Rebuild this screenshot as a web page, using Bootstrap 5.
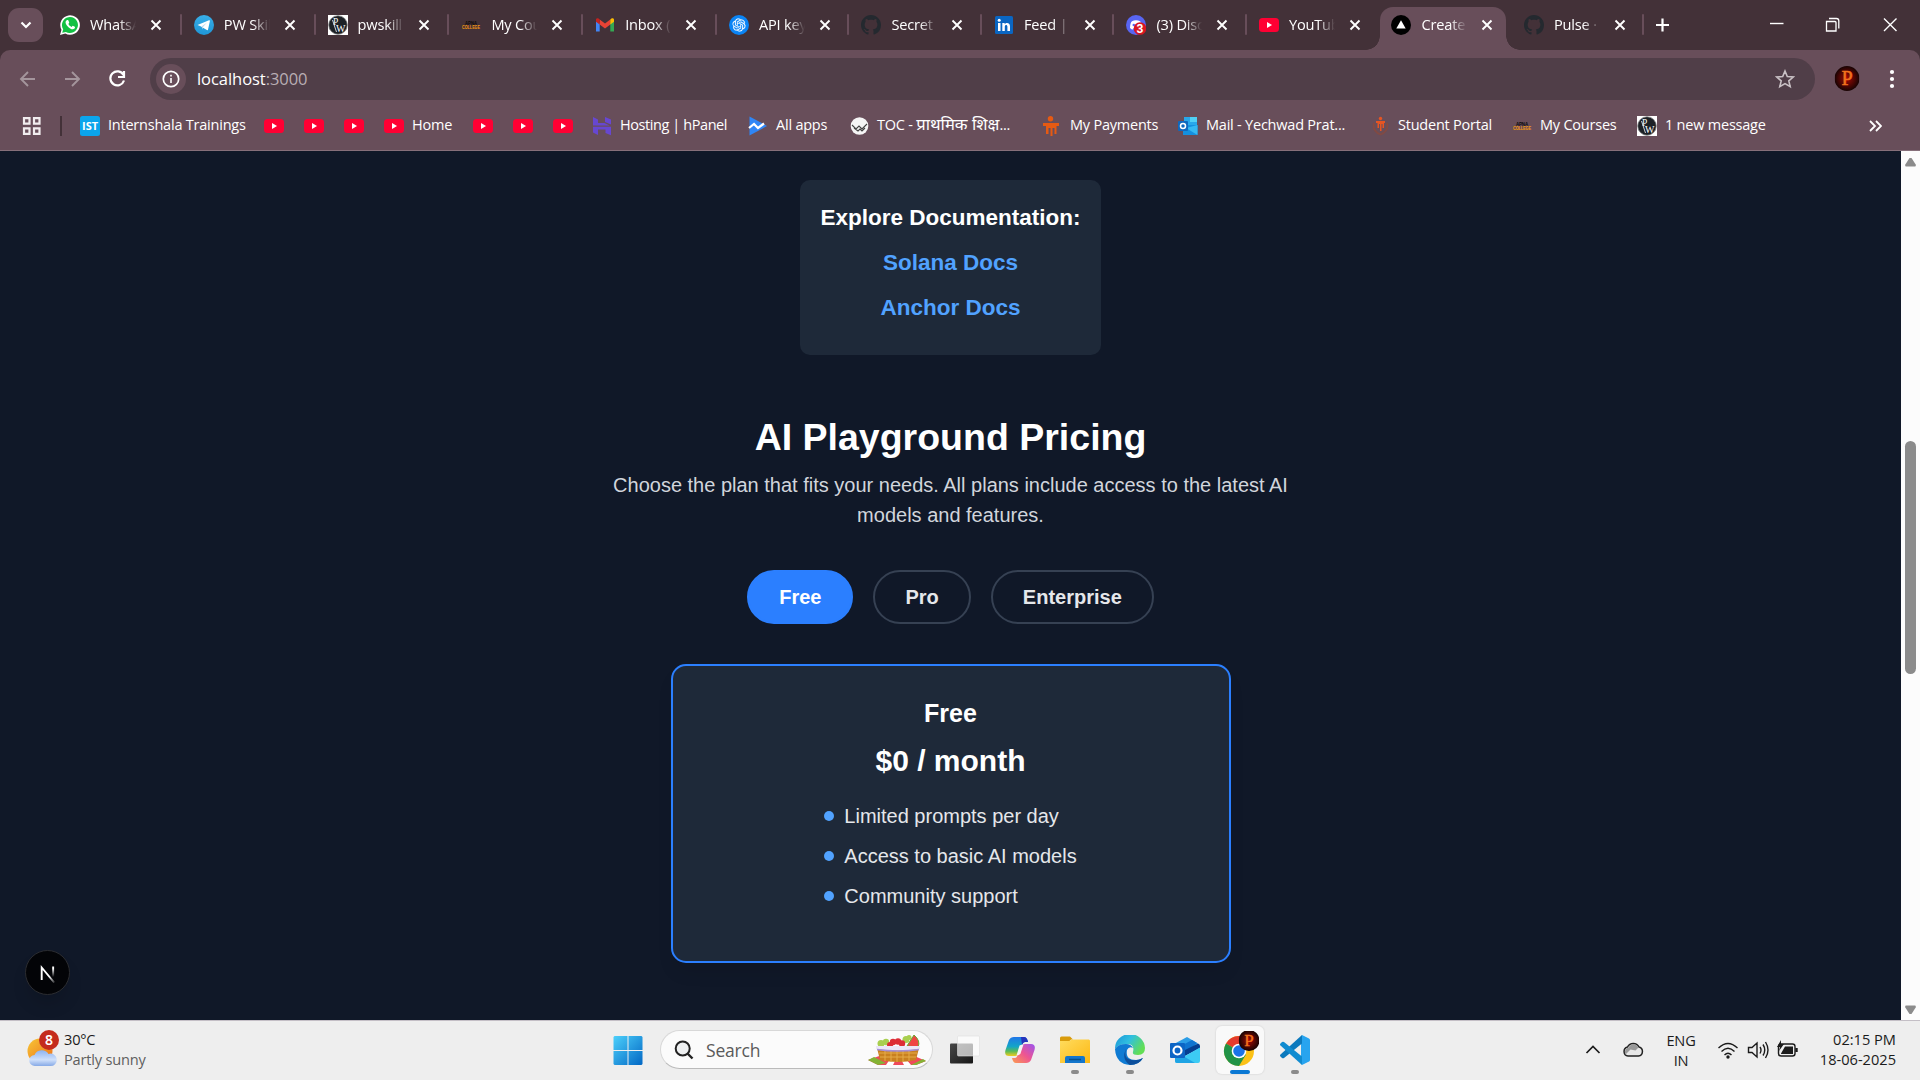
<!DOCTYPE html>
<html lang="en">
<head>
<meta charset="utf-8">
<title>Create Next App</title>
<link rel="stylesheet" href="https://cdn.jsdelivr.net/npm/bootstrap@5.3.0/dist/css/bootstrap.min.css">
<style>
html,body{height:100%}
body{font-family:"Open Sans","Noto Sans",sans-serif;overflow:hidden;background:#101828;width:1920px;height:1080px}
svg{display:block;flex:none}
.tabstrip{height:50px;background:#433138;padding-left:8px}
.tab-search{width:35px;height:34px;border-radius:11px;background:#684e5a;margin-right:5px;flex:none}
.btab{width:132.5px;height:43px;margin-top:7px;padding:0 0 0 12px;position:relative;color:#fff;flex:none}
.btab:nth-child(-n+6){width:133.8px}
.btab::after{content:"";position:absolute;right:0;top:7px;width:2px;height:21px;background:#684e5a;border-radius:1px}
.btab .ttl{width:48px;margin-left:10px;white-space:nowrap;font-size:14.6px;letter-spacing:-.2px;-webkit-mask-image:linear-gradient(90deg,#000 60%,transparent 96%);mask-image:linear-gradient(90deg,#000 60%,transparent 96%)}
.btab .cls{margin-left:12px}
.btab>*{margin-top:-7px}
.btab.cur::before{content:"";position:absolute;left:1px;right:6px;top:0;bottom:0;background:#684e5a;border-radius:13px 13px 0 0}
.btab.cur>*{position:relative;z-index:1}
.btab.cur::after,.btab.prev::after{display:none}
.flare{position:absolute!important;bottom:0;width:14px;height:14px;margin:0!important}
.flare.l{left:-13px;background:radial-gradient(circle at 0 0,transparent 13.5px,#684e5a 14px)}
.flare.r{right:-8px;background:radial-gradient(circle at 100% 0,transparent 13.5px,#684e5a 14px)}
.corner-fill{background:#433138}
.toolbar{height:51px;background:#684e5a;border-radius:10px 10px 0 0;padding:8px 0 0 17px}
.omni{width:1665px;height:42px;border-radius:21px;background:#503e48;padding-left:6px;padding-right:20px;margin-left:23px;color:#fff;font-size:16.5px;letter-spacing:-.05px}
.omni .info-dot{width:30px;height:30px;border-radius:50%;background:#684e5a}
.omni .url{margin-left:11px}
.omni .port{color:#b9aeb4}
.bmbar{height:50px;background:#684e5a;border-bottom:1px solid #866f7a;padding-left:22px;color:#fff;font-size:14.5px;letter-spacing:-.22px}
.bm{flex:none;white-space:nowrap;gap:8px}
.bm svg{width:20px}
.bm>span{position:relative;top:-1px}
.deva{font-size:16.6px;line-height:16px;letter-spacing:0}
.tight{letter-spacing:-.42px}
.w40{width:40px}.w89{width:89px}.w39{width:39px}
.w184{width:184px}.w156{width:156px}.w101{width:101px}.w193{width:193px}.w136{width:136px}.w192{width:192px}.w142{width:142px}.w125{width:125px}.w232{width:232px}
.bm-rule{width:2px;height:20px;background:#433138;margin:0 18px 0 19px}
.viewport{height:869px;background:#101828}
.site{width:1901px;padding-top:29px;font-family:"Liberation Sans",Arial,sans-serif;font-size:20px;line-height:30px;color:#ebe6e7}
.doc-card{background:#1e2939;border-radius:10px;padding:20px 20px 30px;gap:10px;font-weight:700;font-size:22.5px;line-height:35px;width:301px;color:#fff;text-align:center;white-space:nowrap}
.doc-card a{color:#51a2ff;text-decoration:none}
.site h2{font-size:37.5px;line-height:45px;font-weight:700;color:#fff;margin:60px 0 10px}
.intro{width:720px;color:#d1d5dc;margin:0 0 40px;text-align:center}
.plans{gap:20px}
.plan-btn{border:2px solid #364153;border-radius:27px;background:transparent;color:#e5e7eb;font-weight:700;font-size:20px;line-height:30px;padding:10px 30px}
.plan-btn.on{background:#2b7fff;border-color:#2b7fff;color:#fff}
.plan-card{width:560px;height:299px;margin-top:40px;border:2px solid #2b7fff;border-radius:15px;background:#1e2939;padding:30px;box-shadow:0 12px 18px -4px rgba(0,0,0,.1)}
.plan-card h3{font-size:25px;line-height:35px;font-weight:700;margin:0 0 10px;color:#fff}
.price{font-size:30px;line-height:40px;font-weight:700;color:#fff;margin-bottom:20px}
.feat{gap:10px;color:#e5e7eb}
.feat li{gap:10px}
.feat i{width:10px;height:10px;border-radius:50%;background:#51a2ff}
.next-badge{position:absolute;left:25px;top:950px;width:45px;height:45px;border-radius:50%;background:#030407;border:1px solid #2b2c30;box-shadow:0 12px 18px -4px rgba(0,0,0,.15)}
.sbar{width:19px;background:#fcfcfc;padding:6px 0 5px}
.thumb{width:11px;height:233px;border-radius:6px;background:#8b8b8b;margin-top:274px}
.taskbar{height:60px;background:#eee;border-top:1px solid #c4bfc6;color:#1b1b1b;font-size:14.6px;line-height:20px;letter-spacing:-.2px;padding-bottom:2px}
.weather{width:585px;padding-left:26px;gap:5px;flex:none}
.two-line{padding-bottom:2px}
.dim{color:#5f5f5f}
.pinned{flex:none}
.search-pill{width:273px;height:39px;border:1px solid #d8d8d8;border-bottom-color:#bbb;border-radius:20px;background:#fbfbfb;margin-left:17px;padding:0 6px 0 13px;font-size:17.5px;color:#5a5a5a}
.app{width:55px;height:59px;position:relative}
.app::after{content:"";position:absolute;bottom:5px;left:calc(50% - 4px);width:8px;height:4px;border-radius:2px;background:#8a8a8a}
.app.idle::after{display:none}
.app.live::after{width:20px;left:calc(50% - 10px);background:#0a78d4}
.app.live .tile{width:48px;height:48px;border-radius:6px;background:#f9f9f9;box-shadow:0 0 1px 1px #e2e2e2}
.tray{flex:1;padding-right:24px}
.eng{width:56px;margin-right:7px}
.clock{width:96px;letter-spacing:0;white-space:nowrap}
</style>
<script src="https://cdn.jsdelivr.net/npm/bootstrap@5.3.0/dist/js/bootstrap.bundle.min.js"></script>
</head>
<body class="d-flex flex-column">
<svg width="0" height="0" class="position-absolute">
<defs>
<linearGradient id="gw" x1="0" y1="0" x2="1" y2="1"><stop offset="0" stop-color="#4cd0fb"/><stop offset="1" stop-color="#0267c4"/></linearGradient>
<linearGradient id="gtg" x1="0" y1="0" x2="0" y2="1"><stop offset="0" stop-color="#38aee8"/><stop offset="1" stop-color="#1f96d6"/></linearGradient>
<linearGradient id="gsun" x1="0" y1="0" x2="1" y2="1"><stop offset="0" stop-color="#f7c636"/><stop offset="1" stop-color="#ee6d18"/></linearGradient>
<linearGradient id="gcl" x1="0" y1="0" x2="0" y2="1"><stop offset="0" stop-color="#8db4f2"/><stop offset=".6" stop-color="#cfe0fb"/><stop offset="1" stop-color="#86a9e6"/></linearGradient>
<linearGradient id="gfo" x1="0" y1="0" x2="1" y2="1"><stop offset="0" stop-color="#ffdc5e"/><stop offset="1" stop-color="#fdb813"/></linearGradient>
<linearGradient id="ged" x1="0" y1="0" x2="1" y2=".5"><stop offset="0" stop-color="#1a93d8"/><stop offset=".5" stop-color="#30bfe0"/><stop offset="1" stop-color="#62de55"/></linearGradient>
<linearGradient id="gc1" x1="0" y1="0" x2="0" y2="1"><stop offset="0" stop-color="#2076e8"/><stop offset=".5" stop-color="#13a5c8"/><stop offset=".75" stop-color="#59bb58"/><stop offset="1" stop-color="#f1cb1e"/></linearGradient>
<linearGradient id="gc2" x1="1" y1="0" x2="0" y2="1"><stop offset="0" stop-color="#9a54f0"/><stop offset=".5" stop-color="#ee5591"/><stop offset="1" stop-color="#fb9d50"/></linearGradient>
<linearGradient id="gtv" x1="0" y1="0" x2="1" y2="1"><stop offset="0" stop-color="#484848"/><stop offset="1" stop-color="#161616"/></linearGradient>
<linearGradient id="gnx" x1="0" y1="0" x2="0" y2="1"><stop offset=".2" stop-color="#fff"/><stop offset="1" stop-color="#fff" stop-opacity="0"/></linearGradient>
<linearGradient id="gnd" x1="0" y1="0" x2="1" y2="1"><stop offset=".6" stop-color="#fff"/><stop offset="1" stop-color="#fff" stop-opacity=".2"/></linearGradient>
<radialGradient id="gav"><stop offset="0" stop-color="#a30a05"/><stop offset="1" stop-color="#170303"/></radialGradient>
<symbol id="x" viewBox="0 0 12 12"><path d="M1.500 1.500l9 9M10.500 1.500l-9 9" stroke="#fff" stroke-width="1.900"/></symbol>
<symbol id="yt" viewBox="0 0 20 20"><rect y="3" width="20" height="14" rx="3.500" fill="#ff0033"/><path d="M8 7l5 3-5 3z" fill="#fff"/></symbol>
<symbol id="gh" viewBox="0 0 16 16"><path fill="#24292f" d="M8 0C3.58 0 0 3.58 0 8c0 3.54 2.29 6.53 5.47 7.59.4.07.55-.17.55-.38 0-.19-.01-.82-.01-1.49-2.01.37-2.53-.49-2.69-.94-.09-.23-.48-.94-.82-1.13-.28-.15-.68-.52-.01-.53.63-.01 1.08.58 1.23.82.72 1.21 1.87.87 2.33.66.07-.52.28-.87.51-1.07-1.78-.2-3.64-.89-3.64-3.95 0-.87.31-1.59.82-2.15-.08-.2-.36-1.02.08-2.12 0 0 .67-.21 2.2.82.64-.18 1.32-.27 2-.27s1.36.09 2 .27c1.53-1.04 2.2-.82 2.2-.82.44 1.1.16 1.92.08 2.12.51.56.82 1.27.82 2.15 0 3.07-1.87 3.75-3.65 3.95.29.25.54.73.54 1.48 0 1.07-.01 1.93-.01 2.2 0 .21.15.46.55.38A8.01 8.01 0 0 0 16 8c0-4.42-3.58-8-8-8z"/></symbol>
<symbol id="pw" viewBox="0 0 20 20"><rect width="20" height="20" fill="#fff"/><circle cx="10" cy="10" r="9.300" fill="#1c2126" stroke="#888" stroke-width=".8"/><text x="5" y="10" font-family="Liberation Serif" font-size="9.500" fill="#fff">P</text><text x="8" y="16.500" font-family="Liberation Serif" font-size="10" fill="#fff">W</text><path d="M4.500 5l4 12" stroke="#fff" stroke-width=".8"/></symbol>
<symbol id="ac" viewBox="0 0 20 20"><text x="10" y="9.500" text-anchor="middle" font-family="Liberation Sans" font-weight="700" font-size="5.500" textLength="12" lengthAdjust="spacingAndGlyphs" fill="#0b0b0b">APNA</text><text x="10" y="14" text-anchor="middle" font-family="Liberation Sans" font-weight="700" font-size="5.800" textLength="18" lengthAdjust="spacingAndGlyphs" fill="#f39a10">COLLEGE</text></symbol>
<symbol id="av" viewBox="0 0 26 26"><circle cx="13" cy="13" r="13" fill="url(#gav)"/><text x="13" y="20" text-anchor="middle" font-family="Liberation Serif" font-size="21" fill="#f2711d" stroke="#f2711d" stroke-width=".5">P</text></symbol>
</defs>
</svg>

<header>
<div class="tabstrip d-flex align-items-start">
 <div class="tab-search d-flex align-items-center justify-content-center mt-2"><svg width="12" height="8" viewBox="0 0 12 8"><path d="M1.500 1.500L6 6l4.500-4.500" fill="none" stroke="#fff" stroke-width="2.200"/></svg></div>
 <div class="btab d-flex align-items-center"><svg width="20" height="20" viewBox="0 0 20 20"><path d="M0 20l1.500-5.200A9.800 9.800 0 1 1 5.300 18.600z" fill="#fff"/><path d="M2.200 17.800l1-3.500a8 8 0 1 1 2.700 2.600z" fill="#12c143"/><path d="M7 5.200c-1.900.8-1.900 3.100.3 5.700 2.600 3.100 5.500 4 6.900 2.900 1-.8.9-1.800.6-2l-2-1c-.5 0-.8 1.200-1.300 1.100-1.200-.4-2.700-1.800-3.100-2.800 0-.4.900-.9.800-1.500l-.8-2c-.3-.5-.8-.6-1.400-.4z" fill="#fff"/></svg><span class="ttl">WhatsA</span><svg class="cls" width="12" height="12"><use href="#x"/></svg></div>
 <div class="btab d-flex align-items-center"><svg width="20" height="20" viewBox="0 0 20 20"><circle cx="10" cy="10" r="10" fill="url(#gtg)"/><path d="M3.500 10l11.500-4.700c.7-.2 1 .1.900.8l-1.900 8.600c-.2.600-.6.700-1.100.4L6 10.900z" fill="#fff"/><path d="M7.500 11.500l5.500-4-4 4.500-.3 2.500z" fill="#b9d9ee"/></svg><span class="ttl">PW Skil</span><svg class="cls" width="12" height="12"><use href="#x"/></svg></div>
 <div class="btab d-flex align-items-center"><svg width="20" height="20"><use href="#pw"/></svg><span class="ttl">pwskill</span><svg class="cls" width="12" height="12"><use href="#x"/></svg></div>
 <div class="btab d-flex align-items-center"><svg width="20" height="20"><use href="#ac"/></svg><span class="ttl">My Co<span>u</span></span><svg class="cls" width="12" height="12"><use href="#x"/></svg></div>
 <div class="btab d-flex align-items-center"><svg width="20" height="20" viewBox="0 0 20 20"><path d="M1 5v11.500h3.700V8z" fill="#4285f4"/><path d="M19 5v11.500h-3.700V8z" fill="#34a853"/><path d="M4.700 4.500v5L10 13.400l5.300-3.900v-5L10 8.500z" fill="#ea4335"/><path d="M1 4.700v2L4.700 9.500v-5C3 2.500 1 3.200 1 4.700z" fill="#c5221f"/><path d="M19 4.700v2l-3.700 2.800v-5C17 2.500 19 3.200 19 4.700z" fill="#fbbc04"/></svg><span class="ttl">Inbox (</span><svg class="cls" width="12" height="12"><use href="#x"/></svg></div>
 <div class="btab d-flex align-items-center"><svg width="20" height="20" viewBox="0 0 20 20"><circle cx="10" cy="10" r="10" fill="#0a84f5"/><path transform="translate(3.400 3.400) scale(.55)" fill="#fff" stroke="#fff" stroke-width=".3" d="M22.2819 9.8211a5.9847 5.9847 0 0 0-.5157-4.9108 6.0462 6.0462 0 0 0-6.5098-2.9A6.0651 6.0651 0 0 0 4.9807 4.1818a5.9847 5.9847 0 0 0-3.9977 2.9 6.0462 6.0462 0 0 0 .7427 7.0966 5.98 5.98 0 0 0 .511 4.9107 6.051 6.051 0 0 0 6.5146 2.9001A5.9847 5.9847 0 0 0 13.2599 24a6.0557 6.0557 0 0 0 5.7718-4.2058 5.9894 5.9894 0 0 0 3.9977-2.9001 6.0557 6.0557 0 0 0-.7475-7.0729zm-9.022 12.6081a4.4755 4.4755 0 0 1-2.8764-1.0408l.1419-.0804 4.7783-2.7582a.7948.7948 0 0 0 .3927-.6813v-6.7369l2.02 1.1686a.071.071 0 0 1 .038.052v5.5826a4.504 4.504 0 0 1-4.4945 4.4944zm-9.6607-4.1254a4.4708 4.4708 0 0 1-.5346-3.0137l.142.0852 4.783 2.7582a.7712.7712 0 0 0 .7806 0l5.8428-3.3685v2.3324a.0804.0804 0 0 1-.0332.0615L9.74 19.9502a4.4992 4.4992 0 0 1-6.1408-1.6464zM2.3408 7.8956a4.485 4.485 0 0 1 2.3655-1.9728V11.6a.7664.7664 0 0 0 .3879.6765l5.8144 3.3543-2.0201 1.1685a.0757.0757 0 0 1-.071 0l-4.8303-2.7865A4.504 4.504 0 0 1 2.3408 7.872zm16.5963 3.8558L13.1038 8.364 15.1192 7.2a.0757.0757 0 0 1 .071 0l4.8303 2.7913a4.4944 4.4944 0 0 1-.6765 8.1042v-5.6772a.79.79 0 0 0-.407-.667zm2.0107-3.0231l-.142-.0852-4.7735-2.7818a.7759.7759 0 0 0-.7854 0L9.409 9.2297V6.8974a.0662.0662 0 0 1 .0284-.0615l4.8303-2.7866a4.4992 4.4992 0 0 1 6.6802 4.66zM8.3065 12.863l-2.02-1.1638a.0804.0804 0 0 1-.038-.0567V6.0742a4.4992 4.4992 0 0 1 7.3757-3.4537l-.142.0805L8.704 5.459a.7948.7948 0 0 0-.3927.6813zm1.0976-2.3654l2.602-1.4998 2.6069 1.4998v2.9994l-2.5974 1.4997-2.6067-1.4997Z"/></svg><span class="ttl">API key</span><svg class="cls" width="12" height="12"><use href="#x"/></svg></div>
 <div class="btab d-flex align-items-center"><svg width="20" height="20"><use href="#gh"/></svg><span class="ttl">Secret</span><svg class="cls" width="12" height="12"><use href="#x"/></svg></div>
 <div class="btab d-flex align-items-center"><svg width="20" height="20" viewBox="0 0 20 20"><rect x="1" y="1" width="18" height="18" rx="1.500" fill="#0a66c2"/><path d="M4 8h2.500v8H4zM8.300 8h2.400v1.200c1.500-2.200 5.300-1.500 5.300 2V16h-2.600v-4.300c0-2.200-2.600-2-2.600 0V16H8.300z" fill="#fff"/><circle cx="5.200" cy="5.300" r="1.500" fill="#fff"/></svg><span class="ttl">Feed |</span><svg class="cls" width="12" height="12"><use href="#x"/></svg></div>
 <div class="btab d-flex align-items-center"><svg width="20" height="20" viewBox="0 0 20 20"><circle cx="10" cy="10" r="10" fill="#5865f2"/><path d="M4 13c0-4 1-6 2-6.800 2.500-1.200 5.500-1.200 8 0C15 7 16 9 16 13c-1 1-2 1.500-3 1.500l-.8-1.500H7.800L7 14.500C6 14.500 5 14 4 13z" fill="#fff"/><circle cx="7.800" cy="10" r="1.300" fill="#5865f2"/><circle cx="14" cy="13.500" r="6.300" fill="#d8151f"/><text x="14" y="18" text-anchor="middle" font-family="Roboto" font-weight="700" font-size="12" fill="#fff">3</text></svg><span class="ttl">(3) Disc</span><svg class="cls" width="12" height="12"><use href="#x"/></svg></div>
 <div class="btab prev d-flex align-items-center"><svg width="20" height="20"><use href="#yt"/></svg><span class="ttl">YouTub</span><svg class="cls" width="12" height="12"><use href="#x"/></svg></div>
 <div class="btab cur d-flex align-items-center"><b class="flare l"></b><b class="flare r"></b><svg width="20" height="20" viewBox="0 0 20 20"><circle cx="10" cy="10" r="10" fill="#000"/><path d="M10 5.200l4.700 8.300H5.300z" fill="#fff"/></svg><span class="ttl">Create</span><svg class="cls" width="12" height="12"><use href="#x"/></svg></div>
 <div class="btab d-flex align-items-center"><svg width="20" height="20"><use href="#gh"/></svg><span class="ttl">Pulse ·</span><svg class="cls" width="12" height="12"><use href="#x"/></svg></div>
 <svg width="275" height="50" viewBox="1645 0 275 50"><g fill="none" stroke="#fff"><path d="M1657 25h13M1663.500 18.500v13" stroke-width="2.200"/><path d="M1771 23.500h13.500" stroke-width="1.400"/><path d="M1827.500 21.500h8.500q1 0 1 1v8.500h-9.500z" stroke-width="1.300"/><path d="M1830 18.500h7.500q2.300 0 2.300 2.300v7.700" stroke-width="1.300"/><path d="M1885 18.500l12.500 12.500M1897.500 18.500l-12.500 12.500" stroke-width="1.400"/></g></svg>
</div>
<div class="corner-fill"><div class="toolbar d-flex">
 <svg width="110" height="42" viewBox="17 58 110 42"><g fill="none" stroke-width="1.900"><path d="M35 79H21.500M28 72l-7 7 7 7M65 79h13.500M72 72l7 7-7 7" stroke="#a4959c"/><path d="M123.500 75a7 7 0 1 0 .5 5.500M124 71v6h-6" stroke="#fff" stroke-width="2.200"/></g></svg>
 <div class="omni d-flex align-items-center"><div class="info-dot d-flex align-items-center justify-content-center"><svg width="18" height="18" viewBox="0 0 18 18"><circle cx="9" cy="9" r="7.700" fill="none" stroke="#fff" stroke-width="1.700"/><path d="M9 8v5M9 4.800v1.700" stroke="#fff" stroke-width="1.600"/></svg></div><span class="url">localhost<span class="port">:3000</span></span><svg class="ms-auto" width="20" height="20" viewBox="0 0 20 20"><path d="M10 2l2.300 5.500 6 .5-4.500 3.900 1.400 5.800L10 14.600l-5.200 3.100 1.400-5.800L1.700 8l6-.5z" fill="none" stroke="#c9c1c5" stroke-width="1.600"/></svg></div>
 <svg width="90" height="42" viewBox="1815 58 90 42"><svg x="1834.500" y="66" width="25" height="25"><use href="#av"/></svg><g fill="#fff"><circle cx="1892" cy="72" r="2.100"/><circle cx="1892" cy="79" r="2.100"/><circle cx="1892" cy="86" r="2.100"/></g></svg>
</div></div>
<div class="bmbar d-flex align-items-center">
 <svg width="19" height="18" viewBox="0 0 19 18"><path d="M2 1.200h5.500v5.500H2zM12 1.200h5.500v5.500H12zM2 11.300h5.500v5.500H2zM12 11.300h5.500v5.500H12z" fill="none" stroke="#f1edef" stroke-width="2.200"/></svg><div class="bm-rule"></div>
 <div class="bm w184 d-flex align-items-center"><svg height="20" viewBox="0 0 20 20"><rect width="20" height="20" rx="2.500" fill="#0ba5ec"/><text x="10" y="14.200" text-anchor="middle" font-family="Open Sans" font-weight="700" font-size="11" textLength="16" fill="#fff">IST</text></svg><span>Internshala Trainings</span></div>
 <div class="bm w40"><svg height="20"><use href="#yt"/></svg></div>
 <div class="bm w40"><svg height="20"><use href="#yt"/></svg></div>
 <div class="bm w40"><svg height="20"><use href="#yt"/></svg></div>
 <div class="bm w89 d-flex align-items-center"><svg height="20"><use href="#yt"/></svg><span>Home</span></div>
 <div class="bm w40"><svg height="20"><use href="#yt"/></svg></div>
 <div class="bm w40"><svg height="20"><use href="#yt"/></svg></div>
 <div class="bm w39"><svg height="20"><use href="#yt"/></svg></div>
 <div class="bm w156 d-flex align-items-center"><svg height="20" viewBox="0 0 20 20"><path d="M1 1l5 2.500V7h6.500l5 2.500H1zM13 1l6 2.500v5L13 6zM1 10.700h18v8.500L13.500 17v-3.500H6V19l-5-2.500z" fill="#6747d1"/></svg><span class="tight">Hosting | hPanel</span></div>
 <div class="bm w101 d-flex align-items-center"><svg height="20" viewBox="0 0 20 20"><path d="M1.500.5L19 10 1.500 19.500z" fill="#2f86f6"/><path d="M1 12l5-4 4 4 6-4.500" fill="none" stroke="#fff" stroke-width="2.200"/></svg><span>All apps</span></div>
 <div class="bm w193 d-flex align-items-center"><svg height="20" viewBox="0 0 20 20"><circle cx="10.500" cy="10" r="8.800" fill="#f5f5f5"/><path d="M3 9l4 4 3-3 3 3 5-5M5 12l4 3 2-2 2 2 3-3" fill="none" stroke="#444" stroke-width="1.100"/></svg><span>TOC - <span class="deva">प्राथमिक शिक्ष</span>...</span></div>
 <div class="bm w136 d-flex align-items-center"><svg height="20" viewBox="0 0 20 20"><g fill="#e65a13"><circle cx="8.500" cy="2.800" r="2.700"/><path d="M1 7h16v3h-2.500v8h-2v-6h-2v8h-2v-8h-2v6H4v-8H1z"/></g></svg><span>My Payments</span></div>
 <div class="bm w192 d-flex align-items-center"><svg height="20" viewBox="0 0 20 20"><path d="M6 1h13v8H6z" fill="#28a8ea"/><path d="M12 1h7v5h-7z" fill="#50d0f5"/><path d="M5 9h14.500v10H5z" fill="#1490df"/><path d="M19.500 9v10L8 12z" fill="#35b8f1"/><rect y="5" width="10" height="10" rx="1" fill="#0f68be"/><circle cx="5" cy="10" r="2.500" fill="none" stroke="#fff" stroke-width="1.500"/></svg><span>Mail - Yechwad Prat...</span></div>
 <div class="bm w142 d-flex align-items-center"><svg height="20" viewBox="0 0 20 20"><path d="M4 7q-2 8 6.500 11.500Q19 15 17 7" fill="none" stroke="#824a43" stroke-width="1.800"/><g fill="#e65522"><circle cx="10.500" cy="2.500" r="1.700"/><path d="M6 5h9v2h-1v5h-1.500V8h-1v7H10V8H9v4H7.500V7H6z"/></g></svg><span>Student Portal</span></div>
 <div class="bm w125 d-flex align-items-center"><svg height="20"><use href="#ac"/></svg><span>My Courses</span></div>
 <div class="bm w232 d-flex align-items-center"><svg height="20"><use href="#pw"/></svg><span>1 new message</span></div>
 <svg width="13" height="12" viewBox="0 0 13 12"><path d="M1 1l5 5-5 5M7 1l5 5-5 5" fill="none" stroke="#fff" stroke-width="1.800"/></svg>
</div>
</header>

<main class="viewport d-flex">
 <div class="site d-flex flex-column align-items-center">
  <div class="doc-card d-flex flex-column"><span>Explore Documentation:</span><a href="#">Solana Docs</a><a href="#">Anchor Docs</a></div>
  <h2>AI Playground Pricing</h2>
  <p class="intro">Choose the plan that fits your needs. All plans include access to the latest AI<br>models and features.</p>
  <div class="plans d-flex"><button class="plan-btn on">Free</button><button class="plan-btn">Pro</button><button class="plan-btn">Enterprise</button></div>
  <section class="plan-card d-flex flex-column align-items-center">
   <h3>Free</h3><div class="price">$0 / month</div>
   <ul class="feat list-unstyled d-flex flex-column mb-0">
    <li class="d-flex align-items-center"><i></i>Limited prompts per day</li>
    <li class="d-flex align-items-center"><i></i>Access to basic AI models</li>
    <li class="d-flex align-items-center"><i></i>Community support</li>
   </ul>
  </section>
 </div>
 <div class="sbar d-flex flex-column align-items-center"><svg width="13" height="10" viewBox="0 0 13 10"><path d="M5.500 1h2l4.500 7-.7 1.500H1.700L1 8z" fill="#8b8b8b"/></svg><div class="thumb"></div><svg class="mt-auto" width="13" height="10" viewBox="0 0 13 10"><path d="M5.500 9h2L12 2 11.300.5H1.700L1 2z" fill="#8b8b8b"/></svg></div>
</main>
<div class="next-badge d-flex align-items-center justify-content-center"><svg width="18" height="20" viewBox="0 0 18 20"><path d="M2.700 17V4.500l12.500 15" fill="none" stroke="url(#gnd)" stroke-width="1.900"/><rect x="13.200" y="3.500" width="1.900" height="10.500" fill="url(#gnx)"/></svg></div>

<footer class="taskbar d-flex align-items-center">
 <div class="weather d-flex align-items-center"><svg width="33" height="40" viewBox="0 0 33 40"><circle cx="14" cy="21" r="12.500" fill="url(#gsun)"/><path d="M9 36a5.500 5.500 0 0 1-.5-11 8 8 0 0 1 14-1A6.200 6.200 0 1 1 24 36z" fill="url(#gcl)"/><circle cx="23" cy="10" r="10" fill="#c42b1c"/><text x="23" y="15" text-anchor="middle" font-family="Noto Sans" font-size="14" font-weight="600" fill="#fff">8</text></svg><div class="two-line">30°C<br><span class="dim">Partly sunny</span></div></div>
 <div class="pinned d-flex align-items-center ps-4">
  <svg class="ms-1" width="30" height="30" viewBox="0 0 30 30"><path d="M1.500 1H14.500v14H.5V2zM15.500 1h13l1 1v13h-14zM.5 16h14v14h-13l-1-1zM15.500 16h14v13l-1 1h-13z" fill="url(#gw)"/></svg>
  <div class="search-pill d-flex align-items-center"><svg width="20" height="20" viewBox="0 0 20 20"><circle cx="8.700" cy="8.500" r="7" fill="#eef0f1" stroke="#222" stroke-width="2"/><path d="M13.500 13.500l5 5" stroke="#222" stroke-width="2.400"/></svg><span class="ms-2 ps-1">Search</span>
  <svg class="ms-auto" width="58" height="32" viewBox="0 0 58 32"><path d="M0 26l14-5h30l14 6-10 4H10z" fill="#ef4a5a"/><path d="M0 26l6-3 12 6-8 2zM48 31l10-4-3-2-12 6z" fill="#84b335"/><path d="M18 31l4-6h6l-3 6zM36 31l-3-6h5l5 6z" fill="#fff"/><path d="M9 14h42l-3 12q-18 4-36 0z" fill="#c9801f"/><path d="M11 19h38M12 23h36M17 17v10M23 17v11M29 17v11M35 17v11M41 17v10" stroke="#e5ab48"/><g fill="#a9cf4f"><circle cx="13" cy="9.500" r="3.500"/><circle cx="18" cy="8" r="3.200"/><circle cx="38" cy="5.500" r="3.500"/><circle cx="41" cy="3.500" r="2.500"/></g><g fill="#dd2d36"><circle cx="25" cy="8" r="3.200"/><circle cx="30" cy="7.500" r="3.200"/><circle cx="34" cy="9.500" r="3.200"/><circle cx="22" cy="11" r="3"/></g><path d="M46 1l-7 11 11 1q3-6-4-12z" fill="#ef4444" stroke="#6aa832"/><path d="M8 12h44v3q-22 3-44 0z" fill="#ebe7f8"/><path d="M9 15.500q21 3 42 0" fill="none" stroke="#a590d8" stroke-width="1.500"/></svg></div>
  <div class="app idle d-flex align-items-center justify-content-center ms-1"><svg width="32" height="30" viewBox="0 0 32 30"><rect x="1" y="8.500" width="23" height="20" rx="1" fill="url(#gtv)"/><rect x="8.500" y="1" width="22" height="20" rx="1" fill="#fff" fill-opacity=".68" stroke="#ddd" stroke-width=".6"/></svg></div>
  <div class="app idle d-flex align-items-center justify-content-center"><svg width="30" height="28" viewBox="0 0 30 28"><path d="M9 1h10q3 0 4 5h-3q-2 0-3 4l-3 8q-1 2-4 2H4q-5 0-3.500-6L4 4q1.500-3 5-3z" fill="url(#gc1)"/><path d="M16 1h3q3 0 4 5h-3q-2 0-3 3z" fill="#2634bc"/><path d="M21 27H11q-3 0-4-5h3q2 0 3-4l3-8q1-2 4-2h6q5 0 3.500 6L26 24q-1.500 3-5 3z" fill="url(#gc2)"/><path d="M14.500 9.500q2-1 4-1l-3 9q-1 2-4 2z" fill="#f5f5f5"/></svg></div>
  <div class="app d-flex align-items-center justify-content-center"><svg width="30" height="28" viewBox="0 0 30 28"><path d="M0 2q0-1.500 1.500-1.500H10l3 3h-2L9 6H0z" fill="#d99b0b"/><path d="M0 5h9l3-1.500h17l1 1V27H0z" fill="url(#gfo)"/><path d="M5 27v-5q0-2 2-2h16q2 0 2 2v5z" fill="#1476cc"/><path d="M9 23.500h12" stroke="#07508c" stroke-width="1.500"/></svg></div>
  <div class="app d-flex align-items-center justify-content-center"><svg width="30" height="30" viewBox="0 0 30 30"><path d="M0 14A15 14.500 0 0 1 30 13q0 7-7 7-6 0-5-3 2-8-6-8Q3 9 0 14z" fill="url(#ged)"/><path d="M0 14Q3 9 11 9q5 0 7 4-4-2-6 2-2 10 9 10 4 0 7-2Q24 30 15 30 1 29 0 14z" fill="#0f7bd3"/><path d="M11 14q-3 10 6 11 5 1 11-2-4 7-13 7Q6 24 11 14z" fill="#0c4f9c"/></svg></div>
  <div class="app idle d-flex align-items-center justify-content-center"><svg width="30" height="28" viewBox="0 0 30 28"><path d="M4 8L17 1l11 6.500-13 9H4z" fill="#2b9de6"/><path d="M9 11L22 4l5 3-12 10z" fill="#0f74d0"/><path d="M13 15L28 7.500q2 .5 2 2.500v2L15 20z" fill="#053f91"/><path d="M5 20h10l15-8.500V25q0 2-2 2H7q-2 0-2-2z" fill="#3ccbf4"/><path d="M5 20h8l12 7H7q-2 0-2-2z" fill="#1fa4e4"/><rect y="7" width="15" height="15" rx="1" fill="#0c65c5"/><circle cx="7.500" cy="14.500" r="4" fill="none" stroke="#fff" stroke-width="2.200"/></svg></div>
  <div class="app live d-flex align-items-center justify-content-center"><div class="tile d-flex align-items-center justify-content-center"><svg width="38" height="38" viewBox="0 0 38 38"><circle cx="18" cy="20" r="15" fill="#fbc116"/><path d="M18 20L5 12.500a15 15 0 0 1 26 0H18z" fill="#e33b2e"/><path d="M5 12.500a15 15 0 0 0 13 22.500l7-11.500-7-3.500z" fill="#219347"/><circle cx="18" cy="20" r="7.300" fill="#fff"/><circle cx="18" cy="20" r="5.800" fill="#1a73e8"/><svg x="17.500" y="-1" width="21" height="21"><use href="#av"/></svg></svg></div></div>
  <div class="app d-flex align-items-center justify-content-center"><svg width="30" height="30" viewBox="0 0 30 30"><path d="M22 0l7 3.500q1 .5 1 1.500v20q0 1-1 1.500L22 30l-1-3V3z" fill="#28a4ef"/><path d="M22 0v8.500L4 23q-1 .7-2 0l-1.500-1.500q-1-1 0-2z" fill="#0b79bd"/><path d="M22 30v-8.500L4 7q-1-.7-2 0L.5 8.500q-1 1 0 2z" fill="#108bd0"/></svg></div>
 </div>
 <div class="tray d-flex align-items-center justify-content-end">
  <svg width="73" height="30" viewBox="1580 1035 73 30"><path d="M1586.500 1053l6.500-6.500 6.500 6.500" fill="none" stroke="#1b1b1b" stroke-width="1.700"/><path d="M1628 1056a4.600 4.600 0 0 1-.5-9 6.500 6.500 0 0 1 11.500 0 4.600 4.600 0 0 1-.5 9z" fill="#e8e8e8" stroke="#222" stroke-width="1.500"/><path d="M1625 1051.500q0-3 3.500-4 2-3.500 5-3.500t5 3.500l-3 3-5-1-5 5q-1-1-.5-3z" fill="#999"/></svg>
  <div class="text-center eng">ENG<br>IN</div>
  <svg width="84" height="26" viewBox="1716 1037 84 26"><g fill="none" stroke="#1b1b1b" stroke-width="1.400"><path d="M1718.500 1048q9.500-9 19 0M1721.500 1051.500q6.500-6.500 13 0M1724.500 1055q3.500-3.500 7 0"/><path d="M1748.500 1047.500h3.500l5-4.500v14l-5-4.500h-3.500zM1760 1047q2 3 0 6.500M1763 1044.500q3.500 5.500 0 11M1765.500 1042q5 8 0 16"/><rect x="1778.500" y="1044" width="16.500" height="12" rx="2.500"/><path d="M1796.500 1048v4" stroke-width="2.400"/></g><circle cx="1728" cy="1057" r="1.700" fill="#1b1b1b"/><path d="M1781 1053.500l4-7h8v7.500h-12zM1781 1040l-4 7h3l-1 4 5-7h-3z" fill="#1b1b1b"/></svg>
  <div class="text-end clock two-line">02:15 PM<br>18-06-2025</div>
 </div>
</footer>
</body>
</html>
